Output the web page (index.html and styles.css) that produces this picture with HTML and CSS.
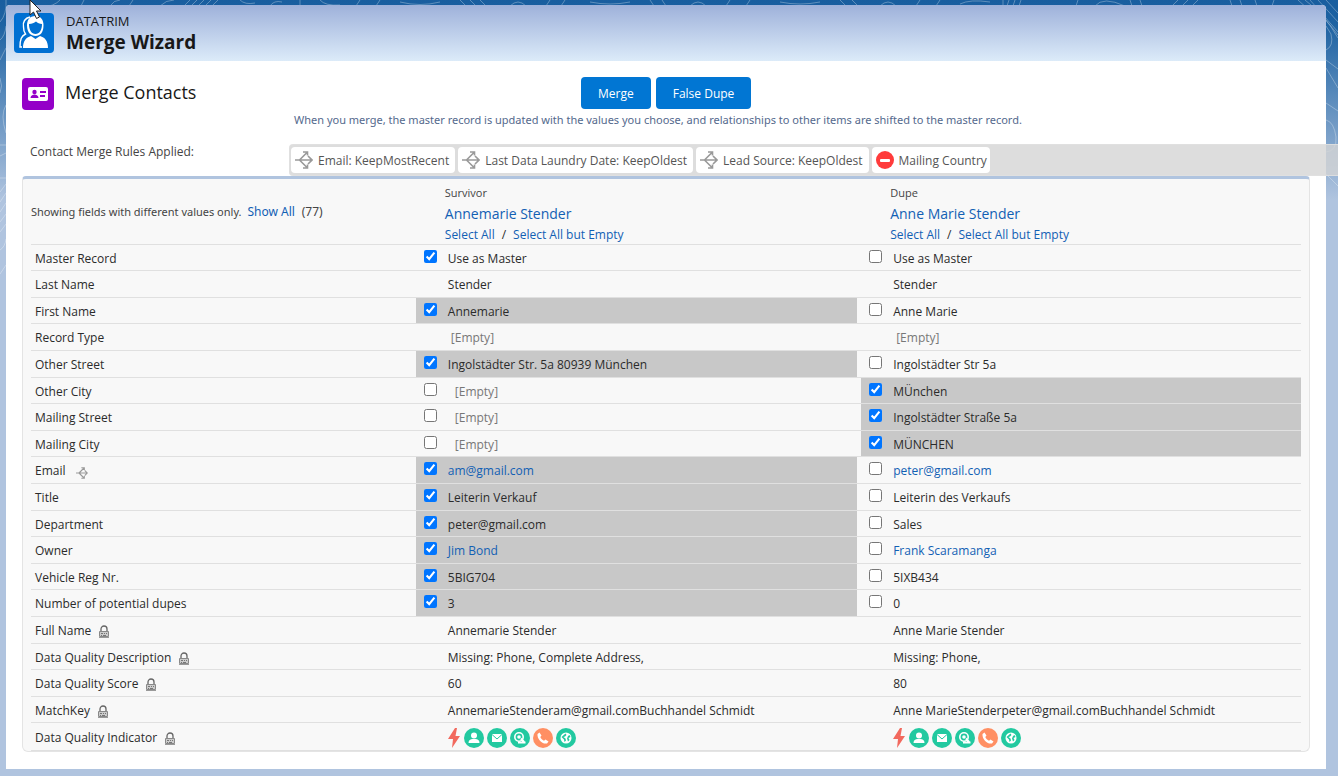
FILE: index.html
```html
<!DOCTYPE html>
<html lang="en">
<head>
<meta charset="utf-8">
<title>Merge Wizard</title>
<link rel="stylesheet" href="styles.css">
</head>
<body>
<svg class="symbols" aria-hidden="true">
  <symbol id="rule" viewBox="0 0 18 18"><path d="M0 9h17M4.500 9L12 1.500M4.500 9l7.500 7.500M8 1h4.500v3.500M8 17h4.500v-3.500M13 5l4 4-4 4" fill="none" stroke="#999" stroke-width="1.600"/></symbol>
  <symbol id="lock" viewBox="0 0 12 13"><path d="M3 6V4a3 3 0 0 1 6 0v2" fill="none" stroke="#666" stroke-width="1.300"/><path d="M1.500 6.500h9v5h-9z" fill="#ccc" stroke="#888"/><path d="M3 8.500h2m1 0h1m1 0h1M3 10.500h1m1 0h3" stroke="#777"/><path d="M1 12.500h10" stroke="#999"/></symbol>
  <symbol id="bolt" viewBox="0 0 12 20"><path d="M7 0L0 11h5L4 20l8-12H7.500L9 0z" fill="#f2695e"/></symbol>
  <symbol id="person" viewBox="0 0 20 20"><circle cx="10" cy="10" r="10" fill="#22c9a0"/><circle cx="10" cy="7.500" r="3" fill="#fff"/><path d="M4.500 15c0-3 2-4 4-4h3c2 0 4 1 4 4z" fill="#fff"/></symbol>
  <symbol id="mail" viewBox="0 0 20 20"><circle cx="10" cy="10" r="10" fill="#22c9a0"/><path d="M5 6h10v8H5z" fill="#fff"/><path d="M5 6.500l5 4.500 5-4.500" fill="none" stroke="#22c9a0"/></symbol>
  <symbol id="place" viewBox="0 0 20 20"><circle cx="10" cy="10" r="10" fill="#22c9a0"/><circle cx="9" cy="9" r="4.200" fill="none" stroke="#fff" stroke-width="1.600"/><circle cx="9" cy="9" r="1.800" fill="#fff"/><path d="M8 14.500h7.500M11 10.500l3 3.500" stroke="#fff" stroke-width="2"/></symbol>
  <symbol id="phone" viewBox="0 0 20 20"><circle cx="10" cy="10" r="10" fill="#ff8f63"/><path d="M4.500 6l2-1.500 2 3L7.300 9c.8 1.700 2 2.800 3.700 3.700l1.500-1.200 3 2-1.500 2C9 16.500 4 11 4.500 6z" fill="#fff"/></symbol>
  <symbol id="globe" viewBox="0 0 20 20"><circle cx="10" cy="10" r="10" fill="#22c9a0"/><circle cx="10" cy="10" r="5.500" fill="#fff"/><path d="M9.500 5.500l1 1.500L9 8.500l-1.500.5 2 1.500.5 2-1.500 1.500-.5-2.500L5.500 9zM12 8l1.500-1 1 2-2 1 1 2-1.500 1.500-1-3z" fill="#22c9a0"/></symbol>
</svg>

<svg class="contours" aria-hidden="true" width="1338" height="300" viewBox="0 0 1338 300">
  <g fill="none" stroke="#fff" stroke-opacity=".3">
    <path d="M60 0q-5 6-20 8M84 0l-3 6M110 6q4-6 10-6M133 0l-4 6M160 6q6-6 14-6M190 0l-6 6M197 0l-6 6M204 0l-6 6M211 0l-6 6M218 0l-6 6M240 0q5 5 15 3M270 6q4-6 12-4M300 0v6M320 0q5 6 20 5M360 0l-4 6M380 0l-4 6M400 2q20 5 40 0M460 0l6 6M470 0l6 6M480 0l6 6M510 6q8-8 16 0M550 0l-4 6M565 0l-4 6M590 2q20 4 40 0M650 0l4 6M662 0l4 6M690 6q8-8 16 0M730 0l-4 6M750 0l-4 6M780 2q20 4 40 0M840 0l6 6M852 0l6 6M880 6q8-8 16 0M920 0l-4 6M940 0l-4 6M960 4q10-5 30-2M1003 0v6M1009 0l-2 6M1015 0l-2 6M1021 0l-2 6M1078 0l-2 6M1095 6q8-10 30 0M1130 0l2 6M1140 0l2 6M1172 6l6-6M1182 6l6-6M1192 6l6-6M1230 0l2 6M1240 0l2 6M1255 0l2 6M1274 0l-2 6"/>
    <path d="M1298 0l22 20M1305 0q20 15 33 38M1310 0l28 32M1318 0l20 22M1326 0l12 13M1326 20l12 15M1326 50q8-4 5-16l-5-8M1326 60l12 9M1326 68l12 20M1326 103l12 8M1326 120q8 2 10 17 1 14-10 15M1326 174l12 12"/>
    <path d="M0 22q7-8 6-22M0 40q5-4 6-14M0 60l6-12M0 78q3 8 0 15M6 105q-6 10 0 28M0 145h6M0 156l6-3M0 178h6M0 192l6-8M0 202l6-9M0 212l6-9M0 222l6-8M0 232l6-8M0 250q5-3 6-11M0 274l6-9"/>
  </g>
</svg>

<main class="card">
  <header class="page-head">
    <svg class="head-icon" viewBox="0 0 40 40" aria-hidden="true">
      <rect width="40" height="40" rx="4" fill="#0070d2"/>
      <path d="M16 4c-5 1-7.500 5-6.500 10 0 3 .5 5 2 7-4 2-5.500 5-5.500 13h2" fill="none" stroke="#fff" stroke-width="1.400"/>
      <path d="M21.500 3c-6 0-8.500 4-8.500 9.500 0 7 4 10.500 8.500 10.500s8-3.500 8-10.500C29.500 7 27 3 21.500 3z" fill="#fff"/>
      <path d="M15 11c3 0 5-1 7-2.500 1.500 1.500 3.500 2.500 6 2.500 0 6-2.500 10-6.500 10s-6.500-4-6.500-10z" fill="#0070d2"/>
      <path d="M9 35c0-7 3-10.500 8-12l4.500 3 4.500-3c5 1.500 8 5 8 12z" fill="#fff"/>
    </svg>
    <div class="head-text">
      <p class="eyebrow">DATATRIM</p>
      <h1>Merge Wizard</h1>
    </div>
  </header>

  <section class="intro">
    <div class="section-title">
      <svg class="contact-icon" viewBox="0 0 32 32" aria-hidden="true">
        <rect width="32" height="32" rx="4" fill="#9400c8"/>
        <rect x="6" y="9" width="20" height="14" rx="2" fill="#fff"/>
        <circle cx="12.500" cy="14" r="2.200" fill="#9400c8"/>
        <path d="M8.500 20c0-2 2-3.500 4-3.500s4 1.500 4 3.500zM18 13h6v2h-6zM18 17h5v2h-5z" fill="#9400c8"/>
      </svg>
      <h2>Merge Contacts</h2>
    </div>
    <div class="actions">
      <div class="buttons">
        <button type="button">Merge</button>
        <button type="button">False Dupe</button>
      </div>
      <p class="hint">When you merge, the master record is updated with the values you choose, and relationships to other items are shifted to the master record.</p>
    </div>
  </section>

  <section class="rules">
    <p class="rules-label">Contact Merge Rules Applied:</p>
    <ul class="rules-bar">
      <li><svg class="rule-icon"><use href="#rule"/></svg>Email: KeepMostRecent</li>
      <li><svg class="rule-icon"><use href="#rule"/></svg>Last Data Laundry Date: KeepOldest</li>
      <li><svg class="rule-icon"><use href="#rule"/></svg>Lead Source: KeepOldest</li>
      <li><svg class="rule-icon" viewBox="0 0 18 18"><circle cx="9" cy="9" r="9" fill="#ff3b3b"/><rect x="4" y="8" width="10" height="3" rx="1" fill="#fff"/></svg>Mailing Country</li>
    </ul>
  </section>

  <section class="panel">
    <table>
      <colgroup><col class="col-field"><col class="col-survivor"><col></colgroup>
      <thead>
        <tr>
          <td class="summary">Showing fields with different values only. <a href="#">Show All</a> <span class="count">(77)</span></td>
          <th scope="col"><span class="role">Survivor</span><a class="name" href="#">Annemarie Stender</a><span class="picks"><a href="#">Select All</a><span>/</span><a href="#">Select All but Empty</a></span></th>
          <th scope="col"><span class="role">Dupe</span><a class="name" href="#">Anne Marie Stender</a><span class="picks"><a href="#">Select All</a><span>/</span><a href="#">Select All but Empty</a></span></th>
        </tr>
      </thead>
      <tbody>
        <tr><th scope="row">Master Record</th><td><label><input type="checkbox" checked>Use as Master</label></td><td><label><input type="checkbox">Use as Master</label></td></tr>
        <tr><th scope="row">Last Name</th><td class="plain">Stender</td><td class="plain">Stender</td></tr>
        <tr><th scope="row">First Name</th><td class="on"><label><input type="checkbox" checked>Annemarie</label></td><td><label><input type="checkbox">Anne Marie</label></td></tr>
        <tr><th scope="row">Record Type</th><td class="plain"><span class="none">[Empty]</span></td><td class="plain"><span class="none">[Empty]</span></td></tr>
        <tr><th scope="row">Other Street</th><td class="on"><label><input type="checkbox" checked>Ingolstädter Str. 5a 80939 München</label></td><td><label><input type="checkbox">Ingolstädter Str 5a</label></td></tr>
        <tr><th scope="row">Other City</th><td><label><input type="checkbox"><span class="none wide">[Empty]</span></label></td><td class="on"><label><input type="checkbox" checked>MÜnchen</label></td></tr>
        <tr><th scope="row">Mailing Street</th><td><label><input type="checkbox"><span class="none wide">[Empty]</span></label></td><td class="on"><label><input type="checkbox" checked>Ingolstädter Straße 5a</label></td></tr>
        <tr><th scope="row">Mailing City</th><td><label><input type="checkbox"><span class="none wide">[Empty]</span></label></td><td class="on"><label><input type="checkbox" checked>MÜNCHEN</label></td></tr>
        <tr><th scope="row">Email<svg class="mini-rule"><use href="#rule"/></svg></th><td class="on"><label><input type="checkbox" checked><a href="#">am@gmail.com</a></label></td><td><label><input type="checkbox"><a href="#">peter@gmail.com</a></label></td></tr>
        <tr><th scope="row">Title</th><td class="on"><label><input type="checkbox" checked>Leiterin Verkauf</label></td><td><label><input type="checkbox">Leiterin des Verkaufs</label></td></tr>
        <tr><th scope="row">Department</th><td class="on"><label><input type="checkbox" checked>peter@gmail.com</label></td><td><label><input type="checkbox">Sales</label></td></tr>
        <tr><th scope="row">Owner</th><td class="on"><label><input type="checkbox" checked><a href="#">Jim Bond</a></label></td><td><label><input type="checkbox"><a href="#">Frank Scaramanga</a></label></td></tr>
        <tr><th scope="row">Vehicle Reg Nr.</th><td class="on"><label><input type="checkbox" checked>5BIG704</label></td><td><label><input type="checkbox">5IXB434</label></td></tr>
        <tr><th scope="row">Number of potential dupes</th><td class="on"><label><input type="checkbox" checked>3</label></td><td><label><input type="checkbox">0</label></td></tr>
        <tr><th scope="row">Full Name<svg class="lock"><use href="#lock"/></svg></th><td class="plain">Annemarie Stender</td><td class="plain">Anne Marie Stender</td></tr>
        <tr><th scope="row">Data Quality Description<svg class="lock"><use href="#lock"/></svg></th><td class="plain">Missing: Phone, Complete Address,</td><td class="plain">Missing: Phone,</td></tr>
        <tr><th scope="row">Data Quality Score<svg class="lock"><use href="#lock"/></svg></th><td class="plain">60</td><td class="plain">80</td></tr>
        <tr><th scope="row">MatchKey<svg class="lock"><use href="#lock"/></svg></th><td class="plain">AnnemarieStenderam@gmail.comBuchhandel Schmidt</td><td class="plain">Anne MarieStenderpeter@gmail.comBuchhandel Schmidt</td></tr>
        <tr><th scope="row">Data Quality Indicator<svg class="lock"><use href="#lock"/></svg></th>
          <td class="plain"><div class="badges"><svg class="bolt"><use href="#bolt"/></svg><svg><use href="#person"/></svg><svg><use href="#mail"/></svg><svg><use href="#place"/></svg><svg><use href="#phone"/></svg><svg><use href="#globe"/></svg></div></td>
          <td class="plain"><div class="badges"><svg class="bolt"><use href="#bolt"/></svg><svg><use href="#person"/></svg><svg><use href="#mail"/></svg><svg><use href="#place"/></svg><svg><use href="#phone"/></svg><svg><use href="#globe"/></svg></div></td></tr>
      </tbody>
    </table>
  </section>
</main>

<svg class="pointer" viewBox="0 0 13 20" aria-hidden="true"><path d="M1 0v15l3.500-3 3 6.500 3-1.500-3-6H12z" fill="#fff" stroke="#222"/></svg>
</body>
</html>
```
FILE: styles.css
```css
* { box-sizing: border-box; }

body {
  margin: 0;
  padding: 5px 12px 7px 6px;
  min-height: 100vh;
  overflow-x: hidden;
  background: #b0c4df linear-gradient(#195e9f 0, #1d62a2 24px, #b0c4df 200px) no-repeat;
  color: #2b2b2b;
  font: 12px/18px "Open Sans", "Noto Sans", sans-serif;
}

h1, h2, p, ul { margin: 0; padding: 0; }
a { color: #1260b4; text-decoration: none; }
.symbols { position: absolute; width: 0; height: 0; }
.contours { position: absolute; top: 0; left: 0; }
.pointer { position: absolute; top: 0; left: 29px; width: 13px; height: 20px; }

.card {
  position: relative;
  padding-bottom: 17px;
  background: #fff;
  border-radius: 4px 4px 0 0;
}

.page-head {
  display: flex;
  align-items: center;
  gap: 12px;
  height: 56px;
  padding: 0 8px;
  border-radius: 4px 4px 0 0;
  background: linear-gradient(#9eb1da, #dcebf9);
}
.head-icon { width: 40px; height: 40px; }
.head-text { padding-bottom: 2px; color: #181818; }
.eyebrow { font-size: 13px; line-height: 20px; }
h1 { font-size: 19px; line-height: 22px; }

.intro {
  display: flex;
  align-items: flex-start;
  padding: 16px 16px 0;
}
.section-title { display: flex; gap: 11px; width: 272px; }
.contact-icon { width: 32px; height: 32px; margin-top: 1px; }
h2 { color: #181818; font-size: 18px; font-weight: 400; line-height: 30px; }
.actions { flex: 1; }
.buttons { display: flex; gap: 5px; margin-left: 287px; }
.buttons button {
  height: 32px;
  padding: 2px 17px 0;
  border: 0;
  border-radius: 4px;
  background: #0176d3;
  color: #fff;
  font: inherit;
}
.hint { color: #54698d; font-size: 11px; line-height: 22px; }
.hint, .summary { font-family: "Noto Sans", "Open Sans", sans-serif; }

.rules { display: flex; margin: 13px -12px 0 0; }
.rules-label { width: 283px; padding-left: 24px; line-height: 16px; color: #444; }
.rules-bar {
  flex: 1;
  display: flex;
  gap: 3px;
  height: 32px;
  padding: 2px 1px;
  list-style: none;
  border: 1px solid rgba(225, 225, 225, .8);
  border-right: 0;
  border-radius: 4px 0 0 4px;
  background: rgba(212, 212, 212, .8);
}
.rules-bar li {
  display: flex;
  align-items: center;
  gap: 5px;
  padding: 2px 6px 0 4px;
  border-radius: 4px;
  background: #fff;
  color: #555;
  white-space: nowrap;
}
.rules-bar li:last-child { padding-right: 3px; }
.rule-icon { width: 18px; height: 18px; margin-bottom: 2px; }

.panel {
  margin: 0 16px;
  padding: 0 8px;
  border: 1px solid #e4e4e4;
  border-top: 3px solid #b0c4df;
  border-radius: 4px 4px 6px 6px;
  background: #f8f8f8;
}
table { width: 100%; table-layout: fixed; border-collapse: separate; border-spacing: 0; }
.col-field { width: 30.3%; }
.col-survivor { width: 35.07%; }
th, td { padding: 0; text-align: left; font-weight: 400; border-bottom: 1px solid #e0e0e0; }

thead th { padding: 4px 0 0 29px; vertical-align: top; }
.summary { font-size: 11px; color: #444; }
.summary a { margin-left: 3px; font-size: 12px; }
.count { margin-left: 4px; font-size: 12px; }
.role { display: block; color: #444; font-size: 11px; line-height: 20px; }
.name { display: block; font-size: 14px; line-height: 22px; }
.picks { display: flex; gap: 7px; line-height: 19px; }

tbody tr { height: 27px; }
tbody tr:nth-child(5n + 1), tbody tr:nth-child(5n + 3) { height: 26px; }
tbody tr:last-child { height: 28px; }
tbody th, tbody td { padding-top: 2px; }
tbody th { padding-left: 4px; }
tbody label { display: flex; gap: 11px; padding-left: 8px; }
.plain { padding-left: 32px; }
.on { background: linear-gradient(#c8c8c8, #c8c8c8) no-repeat 0 0 / 100% 100%; }
.on:nth-child(2) { background-size: calc(100% - 4px) 100%; }
input { width: 13px; height: 13px; margin: 0; accent-color: #0075ff; }
.none { padding-left: 3px; color: #777; }
.wide { padding-left: 7px; }
.mini-rule { width: 12px; height: 12px; margin-left: 10px; vertical-align: -4px; }
.lock { width: 12px; height: 13px; margin-left: 7px; vertical-align: -3px; }
.badges { display: flex; gap: 3px; }
.badges svg { width: 20px; height: 20px; }
.badges .bolt { width: 12px; margin-right: 1px; }
```
